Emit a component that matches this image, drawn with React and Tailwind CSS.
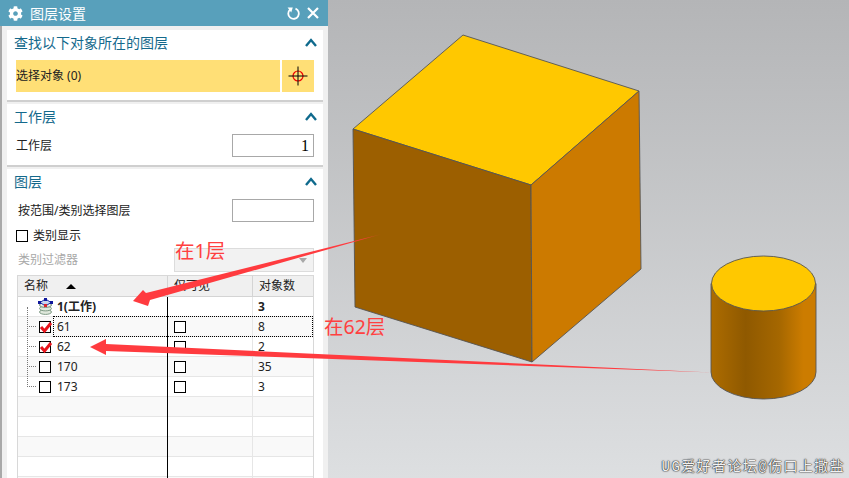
import { FaCog } from "react-icons/fa";

const font = { fontFamily: '"Noto Sans", "Noto Sans CJK SC", sans-serif' };

const Chevron = () => (
  <svg width="12" height="9" viewBox="0 0 12 9" className="text-[#0f6a8d]">
    <polyline points="1,8 6,2 11,8" fill="none" stroke="currentColor" strokeWidth="2.4" />
  </svg>
);

const Section = ({ title, children, className = "" }) => (
  <div className={`bg-white border-b-2 border-[#cfcfcf] ${className}`}>
    <div className="h-[30px] flex items-center justify-between pl-[7px] pr-[6px] pb-[6px] text-[14px] text-[#14698c]">
      <span>{title}</span>
      <Chevron />
    </div>
    {children}
  </div>
);

const Box = ({ checked }) => (
  <span className="relative block w-[12px] h-[12px] border border-black bg-white shrink-0">
    {checked && (
      <svg width="14" height="14" viewBox="0 0 14 14" className="absolute left-[-1px] top-[-2px]">
        <polyline points="2,7 5.5,11 12,3" fill="none" stroke="#e8141c" strokeWidth="3" />
      </svg>
    )}
  </span>
);

const LayerStack = () => (
  <svg width="17" height="17" viewBox="0 0 17 17" className="shrink-0">
    <ellipse cx="8.5" cy="14" rx="6" ry="2.4" fill="#dfe8dc" stroke="#7f9a85" />
    <ellipse cx="8.5" cy="10.5" rx="6" ry="2.4" fill="#dfe8dc" stroke="#7f9a85" />
    <ellipse cx="8.5" cy="7" rx="6" ry="2.4" fill="#e9eee6" stroke="#6f8a78" />
    <polygon points="8.5,1 14,4.5 8.5,8 3,4.5" fill="#c8d4ee" stroke="#1b2fa8" />
    <rect x="1" y="3" width="3" height="3" fill="#10189c" />
    <rect x="13" y="3" width="3" height="3" fill="#10189c" />
    <rect x="7" y="0" width="3" height="3" fill="#10189c" />
    <rect x="7" y="6" width="3" height="3" fill="#d8242c" />
  </svg>
);

const rows = [
  { name: "1(工作)", count: "3", bold: true },
  { name: "61", count: "8", checked: true, focus: true },
  { name: "62", count: "2", checked: true },
  { name: "170", count: "35" },
  { name: "173", count: "3" },
  {},
  {},
  {},
  {},
  {},
];

const LayerTable = () => (
  <div className="relative mt-[3px] ml-[10px] mr-[9px] border border-[#d8d8d8] text-[12px] text-[#222]">
    <div className="grid grid-cols-[149px_85px_1fr] h-[21px] bg-[#f0f0f0] border-b border-[#d4d4d4]">
      <div className="flex items-center pl-[6px]">
        <span>名称</span>
        <span className="ml-[18px] w-0 h-0 border-x-[5px] border-x-transparent border-b-[5px] border-b-black" />
      </div>
      <div className="flex items-center pl-[6px] border-l border-[#d4d4d4]">仅可见</div>
      <div className="flex items-center pl-[6px] border-l border-[#d4d4d4]">对象数</div>
    </div>
    {rows.map((row, i) => (
      <div
        key={i}
        className={`relative grid grid-cols-[149px_85px_1fr] h-[20px] border-b border-[#e6e6e6] ${
          i % 2 === 1 || i === 5 || i === 7 ? "bg-[#f9f9f9]" : "bg-white"
        } ${row.bold ? "font-bold" : ""}`}
      >
        <div className="relative flex items-center pl-[9px]">
          {row.name && i > 0 && <span className="w-[9px] border-t border-dotted border-[#777]" />}
          {i === 0 ? (
            <span className="ml-[10px] mr-[3px]"><LayerStack /></span>
          ) : row.name ? (
            <span className="ml-[3px] mr-[6px]"><Box checked={row.checked} /></span>
          ) : null}
          <span>{row.name}</span>
        </div>
        <div className="flex items-center pl-[7px]">{row.name && i > 0 && <Box />}</div>
        <div className="flex items-center pl-[5px] border-l border-[#e6e6e6]">{row.count}</div>
        {row.focus && (
          <span className="absolute left-[35px] right-0 top-[-1px] bottom-[-1px] border border-dotted border-black" />
        )}
      </div>
    ))}
    {/* tree connector and the column divider that runs through the rows */}
    <span className="absolute left-[9px] top-[31px] h-[80px] border-l border-dotted border-[#777]" />
    <span className="absolute left-[149px] top-[21px] bottom-0 w-px bg-black" />
  </div>
);

const Panel = () => (
  <div className="w-[328px] h-full shrink-0 flex flex-col bg-[#f0f0f0]">
    <div className="h-[26px] shrink-0 bg-[#58a0bb] flex items-center text-white text-[14px] pl-[8px] pr-[9px]">
      <FaCog size={15} />
      <span className="ml-[7px]">图层设置</span>
      <svg width="15" height="15" viewBox="0 0 15 15" className="ml-auto">
        <path d="M4 3.6 A5.3 5.3 0 1 0 9.5 2.6" fill="none" stroke="white" strokeWidth="1.8" />
        <polygon points="1.6,1.6 6.8,1.4 5.2,6.4" fill="white" />
      </svg>
      <svg width="12" height="12" viewBox="0 0 12 12" className="ml-[6px]">
        <path d="M1 1 L11 11 M11 1 L1 11" stroke="white" strokeWidth="2.2" />
      </svg>
    </div>
    <div className="flex-1 border-l-2 border-[#a9a9a9] pl-[5px] pr-[5px] pt-[4px] flex flex-col gap-[2px] overflow-hidden">
      <Section title="查找以下对象所在的图层">
        <div className="flex gap-[2px] pl-[9px] pr-[9px] pb-[8px]">
          <div className="flex-1 h-[32px] bg-[#ffdf76] flex items-center text-[12px] text-[#222]">选择对象 (0)</div>
          <div className="w-[32px] h-[32px] bg-[#ffdf76] flex items-center justify-center">
            <svg width="20" height="20" viewBox="0 0 20 20">
              <circle cx="10" cy="10" r="5" fill="none" stroke="#f00000" strokeWidth="1.2" />
              <path d="M0.5 10 H19.5 M10 0.5 V19.5" stroke="black" strokeWidth="1" />
            </svg>
          </div>
        </div>
      </Section>
      <Section title="工作层">
        <div className="flex items-center justify-between pl-[9px] pr-[9px] pb-[8px] text-[12px] text-[#222]">
          <span>工作层</span>
          <div className="w-[82px] h-[23px] border border-[#a8a8a8] flex items-center justify-end pr-[4px] text-[16px] text-black font-['Liberation_Serif']">1</div>
        </div>
      </Section>
      <Section title="图层" className="flex-1">
        <div className="flex items-center justify-between pl-[11px] pr-[9px] text-[12px] text-[#222]">
          <span>按范围/类别选择图层</span>
          <div className="w-[82px] h-[23px] border border-[#a8a8a8]" />
        </div>
        <div className="flex items-center gap-[5px] pl-[9px] mt-[7px] h-[13px] text-[12px] text-[#222]">
          <Box />
          <span>类别显示</span>
        </div>
        <div className="flex items-center justify-between pl-[11px] pr-[9px] mt-[6px] text-[12px] text-[#a8a8a8]">
          <span>类别过滤器</span>
          <div className="w-[140px] h-[24px] border border-[#dcdcdc] bg-[#f2f2f2] flex items-center justify-end pr-[6px]">
            <span className="w-0 h-0 border-x-[4px] border-x-transparent border-t-[5px] border-t-[#a8a8a8]" />
          </div>
        </div>
        <LayerTable />
      </Section>
    </div>
  </div>
);

// the model sits on a free canvas, coordinates are the page's own
const ModelView = () => (
  <div className="flex-1 h-full bg-gradient-to-b from-[#b4b5b7] to-[#dddfe1]">
    <svg width="521" height="478" viewBox="328 0 521 478" className="block">
      <defs>
        <linearGradient id="cyl" x1="711" x2="816" y1="0" y2="0" gradientUnits="userSpaceOnUse">
          <stop offset="0" stopColor="#ad6c00" />
          <stop offset="0.33" stopColor="#8f5900" />
          <stop offset="0.65" stopColor="#a56700" />
          <stop offset="0.88" stopColor="#cc7c00" />
          <stop offset="1" stopColor="#cc7c00" />
        </linearGradient>
      </defs>
      <g stroke="#555" strokeWidth="0.9" strokeLinejoin="round">
        <polygon points="463,35 639,91 531,185 353,129" fill="#ffc800" />
        <polygon points="353,129 531,185 532,362 355,307" fill="#9c5f00" />
        <polygon points="531,185 639,91 641,269 532,362" fill="#cc7a00" />
        <path d="M711 283.5 V372 A52.5 27 0 0 0 816 372 V283.5 Z" fill="url(#cyl)" />
        <ellipse cx="763.5" cy="283.5" rx="52" ry="27.5" fill="#ffc800" />
      </g>
    </svg>
  </div>
);

const Annotations = () => (
  <>
    <svg width="849" height="478" viewBox="0 0 849 478" className="absolute inset-0 pointer-events-none">
      <defs>
        <linearGradient id="tail1" x1="300" x2="382" y1="0" y2="0" gradientUnits="userSpaceOnUse">
          <stop offset="0" stopColor="#ff3b3f" />
          <stop offset="0.8" stopColor="#ff3b3f" />
          <stop offset="1" stopColor="#ff3b3f" stopOpacity="0.2" />
        </linearGradient>
        <linearGradient id="tail2" x1="500" x2="712" y1="0" y2="0" gradientUnits="userSpaceOnUse">
          <stop offset="0" stopColor="#ff3b3f" />
          <stop offset="0.9" stopColor="#ff3b3f" />
          <stop offset="1" stopColor="#ff3b3f" stopOpacity="0.3" />
        </linearGradient>
      </defs>
      <polygon points="133,301 143,290 146,293 382,234 150,300 148,306" fill="url(#tail1)" />
      <polygon points="90,347 106,339 106,344 712,372.5 106,351 106,355" fill="url(#tail2)" />
    </svg>
    <span className="absolute left-[175px] top-[238px] text-[19.5px] leading-[26px] text-[#ff4040]">在1层</span>
    <span className="absolute left-[324px] top-[314px] text-[19.5px] leading-[26px] text-[#ff4040]">在62层</span>
    <span className="absolute right-[4px] bottom-[2px] text-[14px] leading-[18px] tracking-[1.4px] text-[#f2f2f2] font-['Liberation_Mono','Noto_Sans_CJK_SC',monospace] [text-shadow:0_0_1px_#222,0_0_1px_#222,0_0_2px_#555]">
      UG爱好者论坛@伤口上撒盐
    </span>
  </>
);

export default function App() {
  return (
    <div className="relative flex w-[849px] h-[478px] overflow-hidden" style={font}>
      <Panel />
      <ModelView />
      <Annotations />
    </div>
  );
}
